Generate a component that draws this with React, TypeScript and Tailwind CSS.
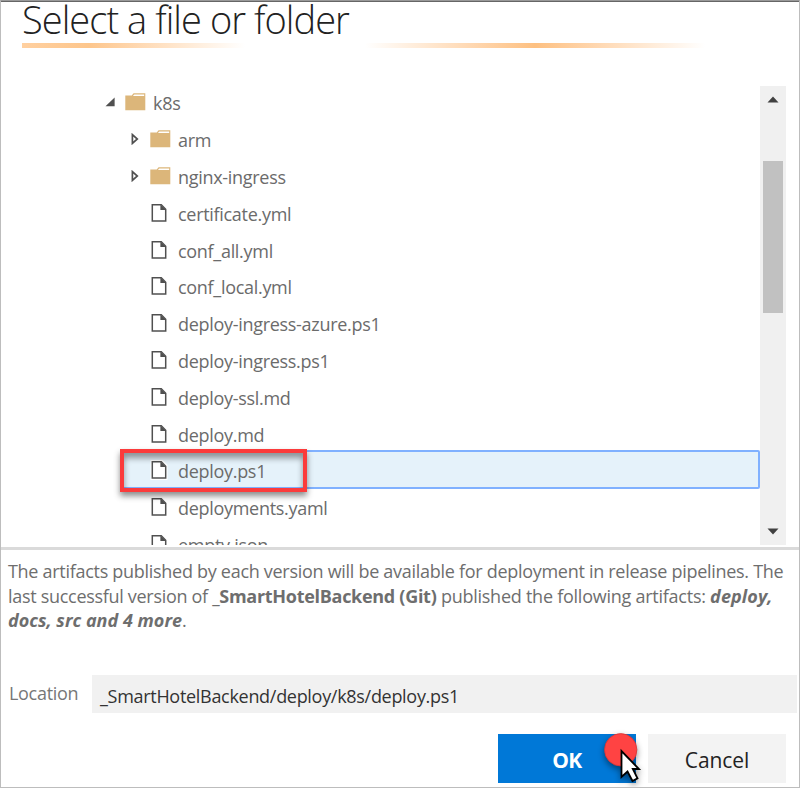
import React from "react";

type Kind = "open" | "closed" | "file";

interface Entry {
  name: string;
  kind: Kind;
  selected?: boolean;
}

const entries: Entry[] = [
  { name: "k8s", kind: "open" },
  { name: "arm", kind: "closed" },
  { name: "nginx-ingress", kind: "closed" },
  { name: "certificate.yml", kind: "file" },
  { name: "conf_all.yml", kind: "file" },
  { name: "conf_local.yml", kind: "file" },
  { name: "deploy-ingress-azure.ps1", kind: "file" },
  { name: "deploy-ingress.ps1", kind: "file" },
  { name: "deploy-ssl.md", kind: "file" },
  { name: "deploy.md", kind: "file" },
  { name: "deploy.ps1", kind: "file", selected: true },
  { name: "deployments.yaml", kind: "file" },
  { name: "empty.json", kind: "file" },
];

function FolderIcon() {
  return (
    <svg className="h-[18px] w-[21px] shrink-0" viewBox="0 0 21 18">
      <path d="M0.3 2.4h6.4L8.6 0.2h11.7v17h-20z" fill="#dcb67a" />
      <path d="M7.9 3 9.3 1.4h9.9V3z" fill="#fff" />
    </svg>
  );
}

function FileIcon({ selected }: { selected?: boolean }) {
  return (
    <svg className="h-[20px] w-[18px] shrink-0" viewBox="0 0 18 20">
      {selected && <path d="M0.5 0h12l5 5v15h-17z" fill="#fff" />}
      <path d="M2.3 1.8h9l4.4 4.4v11.7H2.3z" fill="#fff" stroke="#505050" strokeWidth="1.5" />
      <path d="M10.4 1.5v5.6H16z" fill="#505050" />
    </svg>
  );
}

function Row({ entry }: { entry: Entry }) {
  const { kind, name, selected } = entry;
  const indent = kind === "open" ? "pl-[104px]" : "pl-[129px]";
  const box = selected
    ? "ml-[120px] border-2 border-[#80b1ff] bg-[#e5f2fa] rounded-[2px] -mt-[3px] mb-px h-[38.8px] pl-[7px]"
    : `h-[36.8px] ${indent}`;
  return (
    <div className={`flex shrink-0 items-center ${box}`}>
      <span className="flex w-5 shrink-0 items-center">
        {kind === "open" && (
          <svg className="-mt-[3px] h-[10px] w-[10px]" viewBox="0 0 10 10">
            <path d="M9.6 0.5V9.2H0.5z" fill="#505050" />
          </svg>
        )}
        {kind === "closed" && (
          <svg className="-mt-[2px] ml-px h-[12px] w-[8px]" viewBox="0 0 8 12">
            <path d="M1.4 1.6v8.8L6.3 6z" fill="#fff" stroke="#505050" strokeWidth="1.7" />
          </svg>
        )}
      </span>
      <span className={`flex w-[28px] shrink-0 ${selected ? "mt-px" : "-mt-[2px]"}`}>
        {kind === "file" ? <FileIcon selected={selected} /> : <FolderIcon />}
      </span>
      <span
        className={`whitespace-nowrap text-[18px] leading-6 tracking-[-0.3px] text-[#6b6b6b] ${selected ? "mt-[4px]" : ""}`}
      >
        {name}
      </span>
    </div>
  );
}

export default function App() {
  return (
    <div className="relative flex h-[788px] w-[800px] flex-col overflow-hidden border border-[#bdbdbd] border-t-[#999] bg-white font-['Open_Sans','Noto_Sans',sans-serif]">
      <div className="h-px shrink-0 bg-[#666]" />
      <header className="flex h-[83px] shrink-0 flex-col pl-[21px]">
        <h1 className="h-[41px] whitespace-nowrap text-[38px] font-light leading-[34px] tracking-[-0.94px] text-[#222]">
          Select a file or folder
        </h1>
        <div className="flex gap-[120px]">
          <div className="h-[5px] w-[223px] bg-linear-to-r from-[#ffd0a0] via-[#fdc68c] via-30% to-white" />
          <div className="h-[5px] w-[340px] bg-linear-to-r from-white via-[#fdc081] to-white" />
        </div>
      </header>

      <section className="flex h-[460px] shrink-0 pr-[13px]">
        <div className="flex min-w-0 flex-1 flex-col overflow-hidden">
          {entries.map((e) => (
            <Row key={e.name} entry={e} />
          ))}
        </div>
        <div className="mt-px flex w-[26px] shrink-0 flex-col items-center bg-[#f0f0f0]">
          <svg className="mt-[10px] h-[7px] w-[12px]" viewBox="0 0 12 7">
            <path d="M6 0.5 11.5 6.5H0.5z" fill="#404040" />
          </svg>
          <div className="mt-[58px] h-[152px] w-5 bg-[#c1c1c1]" />
          <svg className="mb-[10px] mt-auto h-[7px] w-[12px]" viewBox="0 0 12 7">
            <path d="M6 6.5 11.5 0.5H0.5z" fill="#404040" />
          </svg>
        </div>
      </section>

      <div className="mt-[2px] h-[3px] shrink-0 bg-[#dadada]" />

      <p className="mt-[9px] h-[74px] shrink-0 whitespace-nowrap pl-[7px] text-[18px] leading-[24.5px] text-[#6e6e6e]">
        <span className="tracking-[-0.29px]">The artifacts published by each version will be available for deployment in release pipelines. The</span>
        <br />
        <span className="tracking-[-0.3px]">last successful version of </span>
        <b className="font-bold tracking-[-0.29px]">_SmartHotelBackend (Git)</b>
        <span className="tracking-[-0.25px]"> published the following artifacts: </span>
        <b className="font-bold italic tracking-[0.1px]">deploy,</b>
        <br />
        <b className="font-bold italic tracking-[0.02px]">docs, src and 4 more</b>.
      </p>

      <div className="mt-[42px] flex h-[38px] shrink-0 items-center pl-2 pr-[2px]">
        <label className="-mt-[3px] w-[83px] shrink-0 text-[18px] leading-6 tracking-[-0.3px] text-[#777]">Location</label>
        <div className="flex h-full flex-1 items-center bg-[#f1f1f1] pl-2 pt-[3px]">
          <span className="whitespace-nowrap text-[18px] leading-6 tracking-[-0.3px] text-[#333]">_SmartHotelBackend/deploy/k8s/deploy.ps1</span>
        </div>
      </div>

      <footer className="mt-[21px] flex h-[49px] shrink-0 justify-end gap-3 pr-[13px]">
        <button className="w-[138px] bg-[#0078d7] pt-[4px] text-[21px] font-bold tracking-[-0.5px] text-white">OK</button>
        <button className="w-[138px] bg-[#f3f3f3] pt-[4px] text-[21px] font-medium tracking-[-0.1px] text-[#222]">Cancel</button>
      </footer>

      <div className="absolute left-[118.5px] top-[448px] h-[43px] w-[187px] border-4 border-[#fb3b3b] shadow-[0_4px_6px_rgba(0,0,0,0.45),inset_0_5px_6px_rgba(0,0,0,0.4)]" />
      <svg className="absolute left-[595px] top-[723px] h-[63px] w-[55px] overflow-visible" viewBox="0 0 55 63">
        <g className="drop-shadow-[0_3px_3px_rgba(0,0,0,0.45)]">
          <circle cx="24.7" cy="25.8" r="16.2" fill="#ff4343" stroke="#d93434" strokeWidth="0.8" />
          <path d="M25.5 27v26l6-5.5 5 9.5 5-2.6-4.7-9.4H43z" fill="#fff" stroke="#000" strokeWidth="1.8" />
        </g>
      </svg>
    </div>
  );
}
